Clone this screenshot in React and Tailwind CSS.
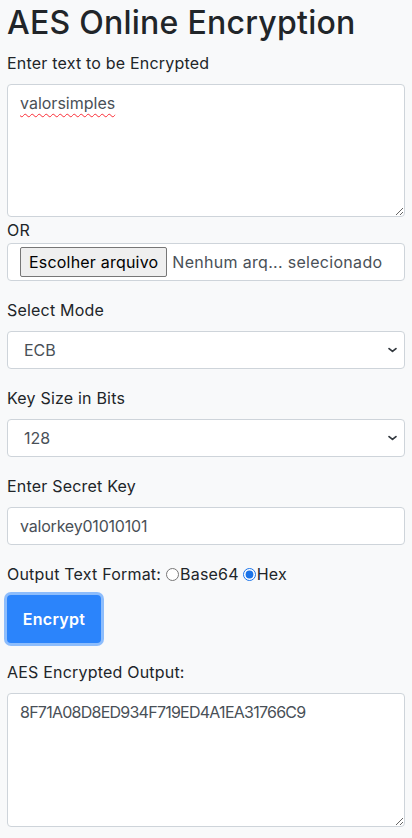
import { useState } from "react";

const font = { fontFamily: "Inter, 'Open Sans', sans-serif" };

function Chevron() {
  return (
    <svg
      className="pointer-events-none absolute right-[7px] top-1/2 -translate-y-1/2"
      width="11"
      height="11"
      viewBox="0 0 16 16"
    >
      <path
        d="M3 6l5 4 5-4"
        fill="none"
        stroke="#343a40"
        strokeWidth="2.6"
        strokeLinecap="round"
        strokeLinejoin="round"
      />
    </svg>
  );
}

function Label({ children, className = "" }) {
  return (
    <label className={`mb-2 block text-[16px] leading-[26px] tracking-[0.2px] text-[#212529] ${className}`}>
      {children}
    </label>
  );
}

function SelectField({ label, value, options }) {
  return (
    <div className="mb-4">
      <Label>{label}</Label>
      <div className="relative">
        <select
          defaultValue={value}
          className="h-[38px] w-full appearance-none rounded border border-[#ced4da] bg-white pl-[16px] pr-8 text-[16px] text-[#495057] outline-none"
        >
          {options.map((o) => (
            <option key={o}>{o}</option>
          ))}
        </select>
        <Chevron />
      </div>
    </div>
  );
}

export default function App() {
  const [format, setFormat] = useState("hex");

  return (
    <div className="min-h-screen bg-[#f8f9fa] px-[7px] pt-[3px] text-[#212529]" style={font}>
      <h1 className="mb-[7px] text-[32px] font-medium leading-[40px] tracking-[0.25px] text-[#212529]">
        AES Online Encryption
      </h1>

      <Label>Enter text to be Encrypted</Label>
      <textarea
        defaultValue="valorsimples"
        className="block h-[133px] w-full resize-y rounded border border-[#ced4da] bg-white px-3 py-[6px] text-[16px] leading-6 text-[#495057] underline decoration-wavy decoration-red-500 decoration-1 underline-offset-4 outline-none"
      />
      <div className="text-[16px] leading-[26px] tracking-[0.2px]">OR</div>
      <div className="mb-4 flex h-[38px] items-center gap-[5px] rounded border border-[#ced4da] bg-white px-3">
        <button className="h-[30px] rounded-[2px] border border-[#767676] bg-[#efefef] px-[8px] text-[16px] tracking-[0.2px] text-black">
          Escolher arquivo
        </button>
        <span className="whitespace-nowrap text-[16px] tracking-[0.3px] text-[#495057]">Nenhum arq... selecionado</span>
      </div>

      <SelectField label="Select Mode" value="ECB" options={["ECB", "CBC"]} />
      <SelectField label="Key Size in Bits" value="128" options={["128", "192", "256"]} />

      <div className="mb-4">
        <Label>Enter Secret Key</Label>
        <input
          defaultValue="valorkey01010101"
          className="h-[38px] w-full rounded border border-[#ced4da] bg-white px-3 text-[16px] tracking-[-0.2px] text-[#495057] outline-none"
        />
      </div>

      <div className="flex items-center text-[16px] leading-[26px] tracking-[0.2px]">
        <span>Output Text Format:</span>
        <input
          type="radio"
          name="fmt"
          checked={format === "base64"}
          onChange={() => setFormat("base64")}
          className="ml-[5px] mr-[1px] h-[13px] w-[13px] accent-[#1a73e8]"
        />
        <span>Base64</span>
        <input
          type="radio"
          name="fmt"
          checked={format === "hex"}
          onChange={() => setFormat("hex")}
          className="ml-[4px] mr-[1px] h-[13px] w-[13px] accent-[#1a73e8]"
        />
        <span>Hex</span>
      </div>

      <button className="mt-[8px] h-[48px] w-[94px] rounded-[4px] bg-[#2b84fb] text-[16px] font-semibold tracking-[0.3px] text-white ring-[3px] ring-[#8dbdfc]">
        Encrypt
      </button>

      <Label className="mt-[16px]">AES Encrypted Output:</Label>
      <textarea
        defaultValue="8F71A08D8ED934F719ED4A1EA31766C9"
        className="block h-[134px] w-full resize-y rounded border border-[#ced4da] bg-white px-3 py-[6px] text-[16px] leading-6 tracking-[-0.75px] text-[#495057] outline-none"
      />
    </div>
  );
}
